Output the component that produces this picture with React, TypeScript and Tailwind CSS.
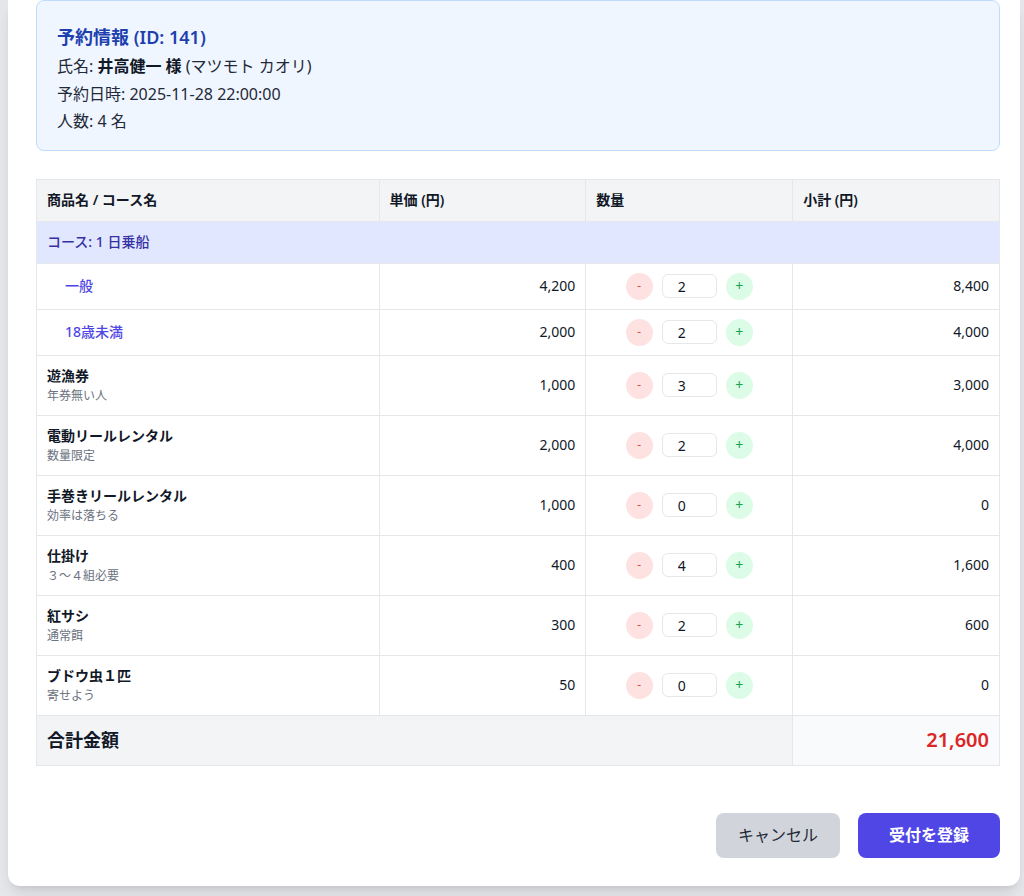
import React from 'react';

type Item = { name: string; sub?: string; price: number; qty: number; course?: boolean };

const items: Item[] = [
  { name: '一般', price: 4200, qty: 2, course: true },
  { name: '18歳未満', price: 2000, qty: 2, course: true },
  { name: '遊漁券', sub: '年券無い人', price: 1000, qty: 3 },
  { name: '電動リールレンタル', sub: '数量限定', price: 2000, qty: 2 },
  { name: '手巻きリールレンタル', sub: '効率は落ちる', price: 1000, qty: 0 },
  { name: '仕掛け', sub: '３～４組必要', price: 400, qty: 4 },
  { name: '紅サシ', sub: '通常餌', price: 300, qty: 2 },
  { name: 'ブドウ虫１匹', sub: '寄せよう', price: 50, qty: 0 },
];

const fmt = (n: number) => n.toLocaleString('en-US');

function QtyControl({ qty }: { qty: number }) {
  return (
    <div className="flex items-center justify-center gap-[9px]">
      <button className="w-[27px] h-[27px] rounded-full bg-[#fee2e2] text-[#ef4444] text-xs flex items-center justify-center">
        -
      </button>
      <input
        readOnly
        value={qty}
        className="w-[55px] h-6 rounded-md border border-[#e5e7eb] bg-white pl-[15px] text-sm text-gray-900 outline-none"
      />
      <button className="w-[27px] h-[27px] rounded-full bg-[#dcfce7] text-[#16a34a] text-sm flex items-center justify-center">
        +
      </button>
    </div>
  );
}

export default function App() {
  const total = items.reduce((s, i) => s + i.price * i.qty, 0);

  return (
    <div
      className="min-h-[896px] bg-[#e5e7eb] pl-2 pr-1"
      style={{ fontFamily: '"Noto Sans", "Noto Sans CJK JP", sans-serif' }}
    >
      <div className="bg-white rounded-b-xl shadow-lg pl-7 pr-5 pb-7">
        {/* 予約情報 */}
        <div className="bg-[#eff6ff] border border-[#bfdbfe] rounded-lg px-5 pt-5 pb-[14px]">
          <p className="text-lg font-semibold text-[#1e40af] leading-8">予約情報 (ID: 141)</p>
          <p className="text-base text-[#1f2937] leading-[27.5px]">
            氏名: <span className="font-bold text-[#111827]">井高健一 様</span> (マツモト カオリ)
          </p>
          <p className="text-base text-[#1f2937] leading-[27.5px]">予約日時: 2025-11-28 22:00:00</p>
          <p className="text-base text-[#1f2937] leading-[27.5px]">人数: 4 名</p>
        </div>

        {/* 明細 */}
        <table className="w-full mt-7 border-collapse border border-[#e5e7eb] text-sm">
          <thead>
            <tr className="bg-[#f3f4f6] h-[42px] text-left">
              <th className="w-[343px] border border-[#e5e7eb] px-[10px] font-semibold text-[#111827]">商品名 / コース名</th>
              <th className="w-[207px] border border-[#e5e7eb] px-[10px] font-semibold text-[#111827]">単価 (円)</th>
              <th className="w-[207px] border border-[#e5e7eb] px-[10px] font-semibold text-[#111827]">数量</th>
              <th className="w-[207px] border border-[#e5e7eb] px-[10px] font-semibold text-[#111827]">小計 (円)</th>
            </tr>
          </thead>
          <tbody>
            <tr className="bg-[#e0e7ff] h-[42px]">
              <td colSpan={4} className="border border-[#e5e7eb] px-[10px] font-medium text-[#3730a3]">
                コース: 1 日乗船
              </td>
            </tr>
            {items.map((it) => (
              <tr key={it.name} className={it.sub ? 'h-[60px]' : 'h-[46px]'}>
                <td className="border border-[#e5e7eb] px-[10px]">
                  {it.course ? (
                    <span className="pl-[18px] font-medium text-[#4f46e5]">{it.name}</span>
                  ) : (
                    <div>
                      <p className="font-semibold text-[#111827] leading-5">{it.name}</p>
                      <p className="text-xs text-[#6b7280] leading-4 mt-0.5">{it.sub}</p>
                    </div>
                  )}
                </td>
                <td className="border border-[#e5e7eb] px-[10px] text-right text-[#111827]">{fmt(it.price)}</td>
                <td className="border border-[#e5e7eb] px-[10px]">
                  <QtyControl qty={it.qty} />
                </td>
                <td className="border border-[#e5e7eb] px-[10px] text-right text-[#111827]">{fmt(it.price * it.qty)}</td>
              </tr>
            ))}
            <tr className="h-[50px]">
              <td colSpan={3} className="bg-[#f3f4f6] border border-[#e5e7eb] px-[10px] text-lg font-bold text-[#111827]">
                合計金額
              </td>
              <td className="bg-[#f9fafb] border border-[#e5e7eb] px-[10px] text-right text-xl font-semibold text-[#dc2626]">
                {fmt(total)}
              </td>
            </tr>
          </tbody>
        </table>

        {/* ボタン */}
        <div className="flex justify-end gap-[18px] mt-[47px]">
          <button className="w-[124px] h-[45px] rounded-lg bg-[#d1d5db] text-base text-[#1f2937]">キャンセル</button>
          <button className="w-[142px] h-[45px] rounded-lg bg-[#4f46e5] text-base font-semibold text-white">
            受付を登録
          </button>
        </div>
      </div>
    </div>
  );
}
